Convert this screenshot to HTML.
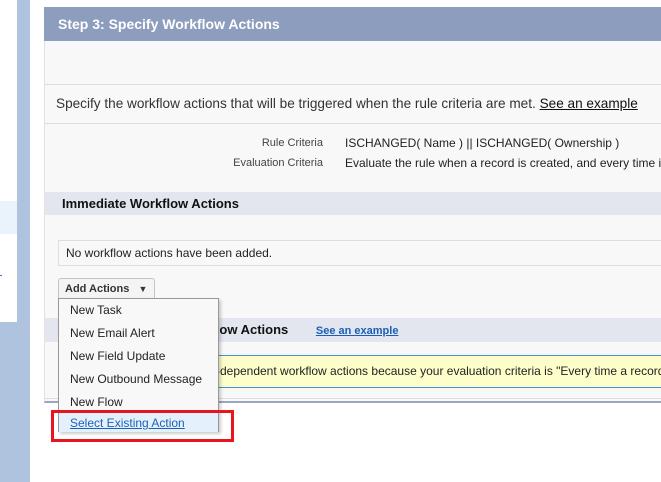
<!DOCTYPE html>
<html><head><style>
body{margin:0;width:661px;height:482px;background:#fff;position:relative;overflow:hidden;font-family:"Liberation Sans",Arial,sans-serif;font-size:12px;color:#222}
.a{position:absolute}
</style></head><body>
<div class="a" style="left:0;top:0;width:30px;height:482px;background:#afc3de"></div>
<div class="a" style="left:0;top:0;width:17px;height:322px;background:#fff"></div>
<div class="a" style="left:0;top:201px;width:17px;height:33px;background:#eaf2fc"></div>
<div class="a" style="left:0;top:275px;width:2px;height:1px;background:#2a7bd0"></div>

<div class="a" style="left:44px;top:7px;width:617px;height:394px;background:#f8f8f8;border-left:1px solid #e2e2e2;border-bottom:2px solid #97a6c2"></div>
<div class="a" style="left:44px;top:7px;width:617px;height:34px;background:#8d9dbe;color:#fff;font-weight:bold;font-size:14px;line-height:34px;padding-left:14px;box-sizing:border-box">Step 3: Specify Workflow Actions</div>
<div class="a" style="left:45px;top:84px;width:616px;height:1px;background:#dcdcdc"></div>
<div class="a" style="left:45px;top:123px;width:616px;height:1px;background:#dcdcdc"></div>
<div class="a" style="left:56px;top:96px;font-size:13.6px;color:#333;white-space:nowrap">Specify the workflow actions that will be triggered when the rule criteria are met. <span style="text-decoration:underline;color:#111">See an example</span></div>
<div class="a" style="left:200px;top:137px;width:123px;text-align:right;font-size:11px;color:#444">Rule Criteria</div>
<div class="a" style="left:200px;top:157px;width:123px;text-align:right;font-size:11px;color:#444">Evaluation Criteria</div>
<div class="a" style="left:345px;top:136px;white-space:nowrap">ISCHANGED( Name ) || ISCHANGED( Ownership )</div>
<div class="a" style="left:345px;top:156px;white-space:nowrap;width:316px;overflow:hidden">Evaluate the rule when a record is created, and every time it's edited</div>

<div class="a" style="left:45px;top:192px;width:616px;height:23px;background:#e3e6ef;font-weight:bold;font-size:13px;line-height:23px;padding-left:17px;box-sizing:border-box;color:#111">Immediate Workflow Actions</div>
<div class="a" style="left:58px;top:240px;width:603px;height:26px;border:1px solid #ddd;border-right:none;box-sizing:border-box;background:#f8f8f8;line-height:24px;padding-left:7px">No workflow actions have been added.</div>

<div class="a" style="left:45px;top:318px;width:616px;height:24px;background:#e3e6ef"></div>
<div class="a" style="left:74px;top:318px;line-height:24px;font-weight:bold;font-size:13px;color:#111;white-space:nowrap">Time-Dependent Workflow Actions <span style="margin-left:24px;font-size:11px;color:#1a5fb4;text-decoration:underline">See an example</span></div>
<div class="a" style="left:58px;top:355px;width:603px;height:33px;background:#fefecb;border:1px solid #4a90d9;border-right:none;box-sizing:border-box;line-height:31px;padding-left:48px;white-space:nowrap;overflow:hidden">You cannot add time-dependent workflow actions because your evaluation criteria is "Every time a record is edited"</div>
<div class="a" style="left:45px;top:398px;width:616px;height:1px;background:#dcdcdc"></div>

<div class="a" style="left:58px;top:278px;width:97px;height:22px;border:1px solid #c4c4c4;border-bottom:none;border-radius:3px 3px 0 0;box-sizing:border-box;background:#f4f4f4;font-weight:bold;font-size:11px;color:#333;line-height:21px;padding-left:6px">Add Actions <span style="font-size:9px;margin-left:6px">▼</span></div>
<div class="a" style="left:58px;top:298px;width:161px;height:134px;background:#f8f8f8;border:1px solid #999;border-bottom:none;box-sizing:border-box;box-shadow:2px 2px 3px rgba(0,0,0,.2)"></div>
<div class="a" style="left:70px;top:299px;line-height:23px;white-space:nowrap;color:#222">New Task<br>New Email Alert<br>New Field Update<br>New Outbound Message<br>New Flow</div>
<div class="a" style="left:59px;top:413px;width:159px;height:19px;background:#e4f1fc"></div>
<div class="a" style="left:70px;top:416px;color:#1a62b8;text-decoration:underline;white-space:nowrap">Select Existing Action</div>
<div class="a" style="left:51px;top:410px;width:183px;height:32px;border:3px solid #e8141e;box-sizing:border-box"></div>
</body></html>
